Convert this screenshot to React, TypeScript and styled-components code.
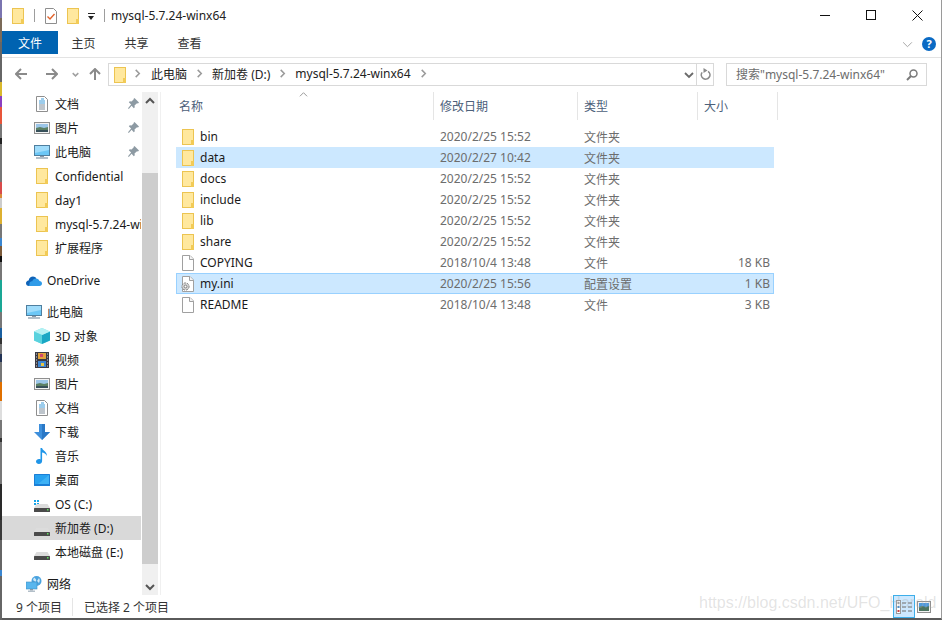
import React from "react";
import styled, { createGlobalStyle } from "styled-components";

const FONT = `"Noto Sans", "Noto Sans CJK SC", sans-serif`;

const GlobalStyle = createGlobalStyle`
  html, body {
    margin: 0;
    padding: 0;
    background: #fff;
  }
  body {
    font-family: ${FONT};
    font-size: 12px;
    color: #1a1a1a;
  }
  * {
    box-sizing: border-box;
  }
`;

// what shows of the desktop behind the window, top to bottom
const edgeStripes: [string, number][] = [
  ["#7a74b0", 18], ["#7b6a58", 24], ["#666666", 40], ["#d9b82c", 14], ["#8b3fc0", 11],
  ["#e8553a", 17], ["#777777", 14], ["#222222", 6], ["#777777", 38], ["#d94b4b", 12],
  ["#d98a3a", 4], ["#cccccc", 10], ["#ddb030", 16], ["#777777", 14], ["#3a86d0", 8],
  ["#7b5a3a", 10], ["#111111", 6], ["#777777", 18], ["#1aa795", 32], ["#777777", 16],
  ["#1a5fa0", 10], ["#333333", 6], ["#777777", 10], ["#223355", 8], ["#777777", 20],
  ["#e07000", 19], ["#dddddd", 19], ["#777777", 18], ["#333333", 4], ["#777777", 42],
  ["#2a2a2a", 36], ["#3a3a3a", 20], ["#666666", 30], ["#3a86d0", 6], ["#666666", 20],
];

function edgeGradient(): string {
  let y = 0;
  const stops = edgeStripes.map(([color, h]) => {
    const stop = `${color} ${y}px ${y + h}px`;
    y += h;
    return stop;
  });
  return `linear-gradient(to bottom, ${stops.join(", ")})`;
}

/* ---------- icons ---------- */

const FolderIcon = () => (
  <svg width="12" height="16" viewBox="0 0 12 16">
    <rect x="0.5" y="0.5" width="11" height="15" fill="#ffe89e" stroke="#ecc451" />
    <rect x="9" y="11" width="3" height="5" fill="#f2cb57" />
  </svg>
);

const CheckDocIcon = () => (
  <svg width="12" height="16" viewBox="0 0 12 16">
    <path d="M.5.5h8l3 3v12H.5z" fill="#fff" stroke="#8e8e8e" />
    <path d="M2.5 8.5l2.5 2.5 4.5-5" fill="none" stroke="#e2622a" strokeWidth="1.4" />
  </svg>
);

const DocIcon = () => (
  <svg width="12" height="16" viewBox="0 0 12 16">
    <path d="M.5.5h8l3 3v12H.5z" fill="#fff" stroke="#8e8e8e" />
    <path d="M5 3h3M3 5h6M3 7h6" stroke="#3a9ad9" />
    <path d="M3 9h6M3 11h6M3 13h6" stroke="#7d8b99" />
  </svg>
);

const FileIcon = () => (
  <svg width="12" height="16" viewBox="0 0 12 16">
    <path d="M.5.5h7.5l3.5 3.5v11.5H.5z" fill="#fff" stroke="#a0a0a0" />
    <path d="M7.5.5v4h4" fill="#f4f4f4" stroke="#a0a0a0" />
  </svg>
);

const IniIcon = () => (
  <svg width="14" height="16" viewBox="0 0 14 16">
    <path d="M2.5.5h7.5l3.5 3.5v11.5h-11z" fill="#fff" stroke="#a0a0a0" />
    <path d="M9.5.5v4h4" fill="#f4f4f4" stroke="#a0a0a0" />
    <circle cx="5.5" cy="10.5" r="3.6" fill="#d6d6d6" stroke="#7f7f7f" strokeDasharray="2 1" />
    <circle cx="5.5" cy="10.5" r="1.4" fill="#fff" stroke="#7f7f7f" />
  </svg>
);

const PictureIcon = () => (
  <svg width="16" height="12" viewBox="0 0 16 12">
    <rect x="0.5" y="0.5" width="15" height="11" fill="#f3f3f3" stroke="#8f8f8f" />
    <rect x="2" y="2" width="12" height="4" fill="#9cc6e8" />
    <path d="M2 6l4-1 4 1 4-1v5H2z" fill="#5c8065" />
    <rect x="2" y="8" width="12" height="2" fill="#37505a" />
  </svg>
);

const PcIcon = () => (
  <svg width="16" height="14" viewBox="0 0 16 14">
    <rect x="0.5" y="0.5" width="15" height="10" fill="#6cc7f6" stroke="#4f7f9f" />
    <path d="M1 1h14v4L1 8z" fill="#9fdcfb" />
    <rect x="6" y="11" width="4" height="1" fill="#8a99a6" />
    <rect x="2" y="12" width="12" height="2" fill="#b3bfc9" />
  </svg>
);

const OneDriveIcon = () => (
  <svg width="16" height="11" viewBox="0 0 16 11">
    <path d="M3 11C1 11 0 9.600 0 8.200 0 6.800 1 5.600 2.600 5.400 3 3 5 1.500 7 1.500c1.400 0 2.600.7 3.300 1.800L5 11z" fill="#0f63b8" />
    <path d="M3 11h10.500c1.500 0 2.500-1 2.500-2.400S14.900 6.200 13.500 6.100C13 4.500 11.700 3.400 10 3.400 8 3.400 6.700 4.700 6.300 6.300 5 6 3.500 7 3.500 8.500 3.500 9.500 3 10.500 3 11z" fill="#2f9be8" />
  </svg>
);

const CubeIcon = () => (
  <svg width="16" height="16" viewBox="0 0 16 16">
    <path d="M8 0l8 3.500v9L8 16l-8-3.500v-9z" fill="#7fe3ea" />
    <path d="M8 7l8-3.500v9L8 16z" fill="#1aa7c4" />
    <path d="M8 0l8 3.500L8 7 0 3.500z" fill="#b4f1f3" />
    <path d="M0 3.500L8 7v9L0 12.500z" fill="#59d2de" />
  </svg>
);

const VideoIcon = () => (
  <svg width="14" height="16" viewBox="0 0 14 16">
    <rect width="14" height="16" fill="#3a3a44" />
    <path d="M1 2h1M1 5h1M1 8h1M1 11h1M1 14h1M12 2h1M12 5h1M12 8h1M12 11h1M12 14h1" stroke="#d8d8d8" />
    <rect x="3" y="1" width="8" height="6" fill="#e0a23c" />
    <rect x="3" y="9" width="8" height="6" fill="#3d86d4" />
    <rect x="5" y="2" width="3" height="3" fill="#d2486a" />
    <rect x="6" y="11" width="3" height="3" fill="#e7c545" />
  </svg>
);

const DownloadIcon = () => (
  <svg width="16" height="16" viewBox="0 0 16 16">
    <path d="M5 0h6v8h5l-8 8-8-8h5z" fill="#3d8fdc" />
    <path d="M8 0h3v8h5l-8 8z" fill="#2a78c6" />
  </svg>
);

const MusicIcon = () => (
  <svg width="12" height="16" viewBox="0 0 12 16">
    <path d="M4.500 0h1.600c.3 2.600 5.300 3.400 4.700 8-.7-2-3-3.200-4.700-3.400V13c0 1.800-1.500 3-3.200 3C1.300 16 0 15 0 13.600s1.500-2.500 3-2.500c.6 0 1.100.1 1.500.4z" fill="#1f95e8" />
  </svg>
);

const DesktopIcon = () => (
  <svg width="16" height="12" viewBox="0 0 16 12">
    <rect width="16" height="12" rx="0.5" fill="#1b7fd6" />
    <rect x="1" y="1" width="14" height="9" fill="#27a2f0" />
    <path d="M15 1v9H4z" fill="#3eb2f5" />
  </svg>
);

const DriveIcon = ({ windows }: { windows?: boolean }) => (
  <svg width="16" height="16" viewBox="0 -2 16 16">
    {windows && <path d="M0 2h2v2H0zM3 2h2v2H3zM0 5h2v2H0zM3 5h2v2H3z" fill="#16a4e8" />}
    <path d="M2.500 6h11l2.500 4H0z" fill="#dcdcdc" />
    <rect y="10" width="16" height="4" rx="0.5" fill="#4a4a4a" />
    <rect x="13" y="11" width="1.500" height="1.500" fill="#5fe05f" />
  </svg>
);

const NetworkIcon = () => (
  <svg width="16" height="16" viewBox="0 0 16 16">
    <circle cx="10.500" cy="5" r="5" fill="#4aa3df" />
    <path d="M8 1.500c2 1 3 3 1.500 4.500L7 4zM13 2c1 1.500 1 3 0 5l-2-2z" fill="#cfe8f7" />
    <rect x="0" y="6" width="11" height="7" fill="#58b6ee" stroke="#3f8fc4" strokeWidth="0.6" />
    <rect x="4" y="13" width="3" height="1.500" fill="#8a99a6" />
    <rect x="2" y="14.500" width="7" height="1.500" fill="#b3bfc9" />
  </svg>
);

const PinIcon = () => (
  <svg width="11" height="11" viewBox="0 0 11 11">
    <path d="M6.500 0l4.500 4.500-1 1-1-.3L6.500 7.500l.3 1.700-1 1-2.200-2.400L.8 11 0 10.200 3.100 6.500.8 4.200l1-1 1.700.3L5.800 1.300 5.500 1z" fill="#8d9aa3" />
  </svg>
);

const Chevron = ({ dir = "right", size = 9, color = "#9a9a9a", weight = 1.500 }: {
  dir?: "right" | "down" | "up";
  size?: number;
  color?: string;
  weight?: number;
}) => {
  const d = dir === "right" ? "M3 1l4 4-4 4" : dir === "down" ? "M1 3l4 4 4-4" : "M1 7l4-4 4 4";
  return (
    <svg width={size} height={size} viewBox="0 0 10 10">
      <path d={d} fill="none" stroke={color} strokeWidth={weight * (10 / size)} />
    </svg>
  );
};

const ArrowIcon = ({ dir, color = "#8a8a8a" }: { dir: "left" | "right" | "up"; color?: string }) => {
  const d = dir === "left" ? "M6 1L1 6l5 5M1 6h11" : dir === "right" ? "M7 1l5 5-5 5M12 6H1" : "M1 6l5-5 5 5M6 1v11";
  return (
    <svg width="13" height="13" viewBox="0 0 13 13">
      <path d={d} fill="none" stroke={color} strokeWidth="2" />
    </svg>
  );
};

const RefreshIcon = () => (
  <svg width="11" height="13" viewBox="0 0 11 13">
    <path d="M5.500 2.500a4.300 4.300 0 1 1-4.300 4.300" transform="rotate(35 5.500 7)" fill="none" stroke="#8a8a8a" strokeWidth="1.600" />
    <path d="M3.500 0l4 2.500-4 2.500z" fill="#8a8a8a" />
  </svg>
);

const SearchIcon = () => (
  <svg width="12" height="12" viewBox="0 0 12 12">
    <circle cx="7.500" cy="4.500" r="3.500" fill="none" stroke="#7a7a7a" strokeWidth="1.500" />
    <path d="M5 7l-4 4" stroke="#7a7a7a" strokeWidth="2" />
  </svg>
);

const DetailsViewIcon = () => (
  <svg width="16" height="14" viewBox="0 0 16 14">
    <rect x="0.500" y="0.500" width="4" height="13" fill="#fff" stroke="#9a9a9a" />
    <rect x="1.500" y="2" width="2" height="2" fill="#999" />
    <rect x="1.500" y="6" width="2" height="2" fill="#3a86d0" />
    <rect x="1.500" y="10" width="2" height="2" fill="#c94040" />
    <path d="M6 3h4M12 3h4M6 7h4M12 7h4M6 11h4M12 11h4" stroke="#6a6a6a" />
  </svg>
);

const TilesViewIcon = () => (
  <svg width="14" height="12" viewBox="0 0 14 12">
    <rect x="0.500" y="0.500" width="13" height="11" fill="#f3f3f3" stroke="#8f8f8f" />
    <rect x="2" y="2" width="10" height="4" fill="#4e9ae0" />
    <path d="M2 6l3-1 4 1 3-1v5H2z" fill="#4d7560" />
  </svg>
);

/* ---------- data ---------- */

type NavItem = { icon: React.ReactNode; label: string; pinned?: boolean; selected?: boolean };

const quickAccess: NavItem[] = [
  { icon: <DocIcon />, label: "文档", pinned: true },
  { icon: <PictureIcon />, label: "图片", pinned: true },
  { icon: <PcIcon />, label: "此电脑", pinned: true },
  { icon: <FolderIcon />, label: "Confidential" },
  { icon: <FolderIcon />, label: "day1" },
  { icon: <FolderIcon />, label: "mysql-5.7.24-winx64" },
  { icon: <FolderIcon />, label: "扩展程序" },
];

const thisPc: NavItem[] = [
  { icon: <CubeIcon />, label: "3D 对象" },
  { icon: <VideoIcon />, label: "视频" },
  { icon: <PictureIcon />, label: "图片" },
  { icon: <DocIcon />, label: "文档" },
  { icon: <DownloadIcon />, label: "下载" },
  { icon: <MusicIcon />, label: "音乐" },
  { icon: <DesktopIcon />, label: "桌面" },
  { icon: <DriveIcon windows />, label: "OS (C:)" },
  { icon: <DriveIcon />, label: "新加卷 (D:)", selected: true },
  { icon: <DriveIcon />, label: "本地磁盘 (E:)" },
];

type FileEntry = {
  name: string;
  date: string;
  kind: string;
  size?: string;
  icon: "folder" | "file" | "ini";
  selected?: boolean;
  focused?: boolean;
};

const files: FileEntry[] = [
  { name: "bin", date: "2020/2/25 15:52", kind: "文件夹", icon: "folder" },
  { name: "data", date: "2020/2/27 10:42", kind: "文件夹", icon: "folder", selected: true },
  { name: "docs", date: "2020/2/25 15:52", kind: "文件夹", icon: "folder" },
  { name: "include", date: "2020/2/25 15:52", kind: "文件夹", icon: "folder" },
  { name: "lib", date: "2020/2/25 15:52", kind: "文件夹", icon: "folder" },
  { name: "share", date: "2020/2/25 15:52", kind: "文件夹", icon: "folder" },
  { name: "COPYING", date: "2018/10/4 13:48", kind: "文件", size: "18 KB", icon: "file" },
  { name: "my.ini", date: "2020/2/25 15:56", kind: "配置设置", size: "1 KB", icon: "ini", selected: true, focused: true },
  { name: "README", date: "2018/10/4 13:48", kind: "文件", size: "3 KB", icon: "file" },
];

const fileIcons = {
  folder: <FolderIcon />,
  file: <FileIcon />,
  ini: <IniIcon />,
};

const columns = [
  { label: "名称", width: 261 },
  { label: "修改日期", width: 144 },
  { label: "类型", width: 120 },
  { label: "大小", width: 80 },
];

/* ---------- page ---------- */

export default function App() {
  return (
    <Screen>
      <GlobalStyle />
      <DesktopEdge style={{ backgroundImage: edgeGradient() }} />
      <Explorer>
        <TitleBar>
          <QuickTools>
            <FolderIcon />
            <ToolSeparator />
            <CheckDocIcon />
            <FolderIcon />
            <DropArrow />
            <ToolSeparator />
          </QuickTools>
          <WindowTitle>mysql-5.7.24-winx64</WindowTitle>
          <WindowControls>
            <WindowButton>
              <svg width="11" height="11" viewBox="0 0 11 11"><path d="M0 5.500h10" stroke="#111" /></svg>
            </WindowButton>
            <WindowButton>
              <svg width="11" height="11" viewBox="0 0 11 11"><rect x="0.500" y="0.500" width="9" height="9" fill="none" stroke="#111" /></svg>
            </WindowButton>
            <WindowButton>
              <svg width="11" height="11" viewBox="0 0 11 11"><path d="M.5.5l10 10M10.500.5l-10 10" stroke="#111" /></svg>
            </WindowButton>
          </WindowControls>
        </TitleBar>

        <Ribbon>
          <FileTab>文件</FileTab>
          <RibbonTab>主页</RibbonTab>
          <RibbonTab>共享</RibbonTab>
          <RibbonTab>查看</RibbonTab>
          <RibbonRight>
            <Chevron dir="down" size={11} color="#a8a8a8" weight={1} />
            <HelpBadge>?</HelpBadge>
          </RibbonRight>
        </Ribbon>

        <NavBar>
          <NavButton $width={30}><ArrowIcon dir="left" /></NavButton>
          <NavButton $width={30}><ArrowIcon dir="right" /></NavButton>
          <NavButton $width={18}><Chevron dir="down" size={7} color="#a0a0a0" /></NavButton>
          <NavButton $width={22}><ArrowIcon dir="up" /></NavButton>
          <AddressBox>
            <FolderIcon />
            <Crumbs>
              <Chevron />
              <span>此电脑</span>
              <Chevron />
              <span>新加卷 (D:)</span>
              <Chevron />
              <span>mysql-5.7.24-winx64</span>
              <Chevron />
            </Crumbs>
            <Chevron dir="down" size={10} color="#6a6a6a" weight={1.800} />
          </AddressBox>
          <RefreshBox><RefreshIcon /></RefreshBox>
          <SearchBox>
            <SearchHint>搜索"mysql-5.7.24-winx64"</SearchHint>
            <SearchIcon />
          </SearchBox>
        </NavBar>

        <Body>
          <Sidebar>
            <NavGroup>
              {quickAccess.map((item) => (
                <NavRow key={item.label} $level={2}>
                  <NavIcon>{item.icon}</NavIcon>
                  <NavLabel>{item.label}</NavLabel>
                  {item.pinned && <PinSlot><PinIcon /></PinSlot>}
                </NavRow>
              ))}
            </NavGroup>
            <NavGroup>
              <NavRow $level={1}>
                <NavIcon><OneDriveIcon /></NavIcon>
                <NavLabel>OneDrive</NavLabel>
              </NavRow>
            </NavGroup>
            <NavGroup>
              <NavRow $level={1}>
                <NavIcon><PcIcon /></NavIcon>
                <NavLabel>此电脑</NavLabel>
              </NavRow>
              {thisPc.map((item) => (
                <NavRow key={item.label} $level={2} $selected={item.selected}>
                  <NavIcon>{item.icon}</NavIcon>
                  <NavLabel>{item.label}</NavLabel>
                </NavRow>
              ))}
            </NavGroup>
            <NavGroup>
              <NavRow $level={1}>
                <NavIcon><NetworkIcon /></NavIcon>
                <NavLabel>网络</NavLabel>
              </NavRow>
            </NavGroup>
          </Sidebar>

          <ScrollBar>
            <ScrollArrow><Chevron dir="up" size={10} color="#555" weight={2} /></ScrollArrow>
            <ScrollTrack>
              <ScrollThumb />
            </ScrollTrack>
            <ScrollArrow><Chevron dir="down" size={10} color="#555" weight={2} /></ScrollArrow>
          </ScrollBar>

          <FileArea>
            <ColumnHeader>
              {columns.map((col, i) => (
                <ColumnCell key={col.label} $width={col.width}>
                  {i === 0 && (
                    <SortCaret>
                      <Chevron dir="up" size={9} color="#9a9a9a" weight={1} />
                    </SortCaret>
                  )}
                  {col.label}
                </ColumnCell>
              ))}
            </ColumnHeader>
            <FileList>
              {files.map((file) => (
                <FileRow key={file.name} $selected={file.selected} $focused={file.focused}>
                  <FileIconSlot>{fileIcons[file.icon]}</FileIconSlot>
                  <FileName>{file.name}</FileName>
                  <FileMeta>{file.date}</FileMeta>
                  <FileMeta>{file.kind}</FileMeta>
                  <FileSize>{file.size}</FileSize>
                </FileRow>
              ))}
            </FileList>
          </FileArea>
        </Body>

        <StatusBar>
          <StatusCount>9 个项目</StatusCount>
          <StatusSelection>已选择 2 个项目</StatusSelection>
          <ViewButtons>
            <ViewButton $active><DetailsViewIcon /></ViewButton>
            <ViewButton><TilesViewIcon /></ViewButton>
          </ViewButtons>
        </StatusBar>

        <Watermark>https://blog.csdn.net/UFO_Harold</Watermark>
      </Explorer>
    </Screen>
  );
}

const Screen = styled.div`
  display: flex;
  width: 942px;
  height: 620px;
  overflow: hidden;
  background: #fff;
`;

const DesktopEdge = styled.div`
  flex: 0 0 2px;
`;

const Explorer = styled.div`
  position: relative;
  flex: 1;
  min-width: 0;
  display: flex;
  flex-direction: column;
  border-right: 1px solid #9a9a9a;
  border-bottom: 2px solid #5a5a5a;
`;

const TitleBar = styled.div`
  flex: 0 0 31px;
  display: flex;
  align-items: center;
  padding-left: 10px;
`;

const QuickTools = styled.div`
  display: flex;
  align-items: center;
  gap: 10px;
  margin-right: 6px;
`;

const ToolSeparator = styled.div`
  width: 1px;
  height: 13px;
  background: #9d9d9d;
`;

const DropArrow = styled.div`
  width: 7px;
  height: 7px;
  margin: 2px -1px 0 -1px;
  border-top: 1px solid #222;
  position: relative;

  &::after {
    content: "";
    position: absolute;
    left: 0;
    top: 2px;
    border-left: 3.5px solid transparent;
    border-right: 3.5px solid transparent;
    border-top: 4px solid #222;
  }
`;

const WindowTitle = styled.div`
  flex: 1;
  font-size: 12px;
  color: #222;
`;

const WindowControls = styled.div`
  display: flex;
  align-self: stretch;
  margin-right: 1px;
`;

const WindowButton = styled.div`
  width: 46px;
  display: flex;
  align-items: center;
  justify-content: center;
`;

const Ribbon = styled.div`
  flex: 0 0 27px;
  display: flex;
  align-items: flex-start;
  border-bottom: 1px solid #e3e3e3;
`;

const FileTab = styled.div`
  width: 56px;
  height: 23px;
  margin-right: -1px;
  display: flex;
  align-items: center;
  justify-content: center;
  background: #0063b1;
  color: #fff;
  font-size: 12px;
`;

const RibbonTab = styled.div`
  width: 53px;
  height: 23px;
  padding-top: 1px;
  display: flex;
  align-items: center;
  justify-content: center;
  color: #333;
  font-size: 12px;
`;

const RibbonRight = styled.div`
  margin-left: auto;
  height: 23px;
  display: flex;
  align-items: center;
  gap: 9px;
  padding: 3px 5px 0 0;
`;

const HelpBadge = styled.div`
  width: 14px;
  height: 14px;
  border-radius: 50%;
  background: #0a6ac4;
  color: #fff;
  font-size: 11px;
  font-weight: 700;
  line-height: 14px;
  text-align: center;
`;

const NavBar = styled.div`
  flex: 0 0 34px;
  display: flex;
  align-items: flex-start;
  padding: 5px 14px 0 4px;
`;

const NavButton = styled.div<{ $width: number }>`
  width: ${(p) => p.$width}px;
  height: 23px;
  flex: none;
  display: flex;
  align-items: center;
  justify-content: center;
`;

const AddressBox = styled.div`
  flex: 1;
  height: 23px;
  margin-left: 2px;
  display: flex;
  align-items: center;
  padding: 0 2px 0 5px;
  border: 1px solid #d9d9d9;
  border-right: none;
`;

const Crumbs = styled.div`
  flex: 1;
  display: flex;
  align-items: center;
  gap: 8px;
  margin-left: 7px;
  padding-bottom: 2px;
  color: #222;

  svg:first-child {
    margin-right: 1px;
  }
`;

const RefreshBox = styled.div`
  flex: none;
  width: 18px;
  height: 23px;
  display: flex;
  align-items: center;
  justify-content: center;
  border: 1px solid #d9d9d9;
`;

const SearchBox = styled.div`
  flex: none;
  width: 201px;
  height: 23px;
  margin-left: 12px;
  display: flex;
  align-items: center;
  justify-content: space-between;
  padding: 0 8px 0 9px;
  border: 1px solid #d9d9d9;
  color: #6d6d6d;
`;

const SearchHint = styled.span`
  margin-top: -2px;
`;

const Body = styled.div`
  flex: 1;
  min-height: 0;
  display: flex;
`;

const Sidebar = styled.nav`
  flex: 0 0 139px;
  margin-right: 1px;
  overflow: hidden;
`;

const NavGroup = styled.div`
  & + & {
    margin-top: 8px;
  }
`;

const NavRow = styled.div<{ $level: number; $selected?: boolean }>`
  position: relative;
  display: flex;
  align-items: center;
  height: 24px;
  padding-left: ${(p) => (p.$level === 2 ? 32 : 24)}px;
  white-space: nowrap;
  overflow: hidden;
  background: ${(p) => (p.$selected ? "#d9d9d9" : "transparent")};
`;

const NavIcon = styled.span`
  flex: 0 0 16px;
  width: 16px;
  display: flex;
  justify-content: center;
  align-items: center;
  margin-right: 5px;
`;

const NavLabel = styled.span`
  color: #1a1a1a;
`;

const PinSlot = styled.span`
  position: absolute;
  right: 2px;
  top: 6px;
  display: flex;
`;

const ScrollBar = styled.div`
  flex: 0 0 16px;
  display: flex;
  flex-direction: column;
  background: #f0f0f0;
`;

const ScrollArrow = styled.div`
  flex: 0 0 17px;
  display: flex;
  align-items: center;
  justify-content: center;
`;

const ScrollTrack = styled.div`
  flex: 1;
  padding: 64px 0 14px;
  display: flex;
`;

const ScrollThumb = styled.div`
  flex: 1;
  background: #cdcdcd;
`;

const FileArea = styled.div`
  flex: 1;
  min-width: 0;
  margin-left: 2px;
  padding-left: 15px;
  border-left: 1px solid #f0f0f0;
`;

const ColumnHeader = styled.div`
  display: flex;
  height: 28px;
  margin-left: -3px;
`;

const ColumnCell = styled.div<{ $width: number }>`
  position: relative;
  flex: 0 0 ${(p) => p.$width}px;
  display: flex;
  align-items: center;
  padding-left: 6px;
  border-right: 1px solid #e5e5e5;
  color: #4c607a;
`;

const SortCaret = styled.span`
  position: absolute;
  left: 126px;
  top: -2px;
  display: flex;
`;

const FileList = styled.div`
  margin-top: 6px;
  width: 598px;
`;

const FileRow = styled.div<{ $selected?: boolean; $focused?: boolean }>`
  display: grid;
  grid-template-columns: 24px 240px 144px 120px 66px;
  align-items: center;
  height: 21px;
  background: ${(p) => (p.$selected ? "#cce8ff" : "transparent")};
  box-shadow: ${(p) => (p.$focused ? "inset 0 0 0 1px #99d1ff" : "none")};
`;

const FileIconSlot = styled.span`
  display: flex;
  align-items: center;
  justify-content: flex-end;
  padding-right: 6px;
`;

const FileName = styled.span`
  color: #1a1a1a;
`;

const FileMeta = styled.span`
  color: #6d6d6d;
`;

const FileSize = styled.span`
  color: #6d6d6d;
  text-align: right;
`;

const StatusBar = styled.div`
  flex: 0 0 23px;
  display: flex;
  align-items: center;
  padding-left: 14px;
  color: #333;
`;

const StatusCount = styled.span`
  width: 57px;
  border-right: 1px solid #e5e5e5;
`;

const StatusSelection = styled.span`
  margin-left: 11px;
`;

const ViewButtons = styled.div`
  margin-left: auto;
  display: flex;
  align-self: stretch;
  align-items: stretch;
  margin-right: 8px;
`;

const ViewButton = styled.div<{ $active?: boolean }>`
  width: ${(p) => (p.$active ? 22 : 18)}px;
  display: flex;
  align-items: center;
  justify-content: center;
  background: ${(p) => (p.$active ? "#cce8ff" : "transparent")};
  border: 1px solid ${(p) => (p.$active ? "#3daee9" : "transparent")};
`;

const Watermark = styled.div`
  position: absolute;
  left: 697px;
  bottom: 6px;
  font-family: "Liberation Sans", sans-serif;
  font-size: 16px;
  color: rgba(170, 170, 170, 0.32);
  white-space: nowrap;
  pointer-events: none;
`;
